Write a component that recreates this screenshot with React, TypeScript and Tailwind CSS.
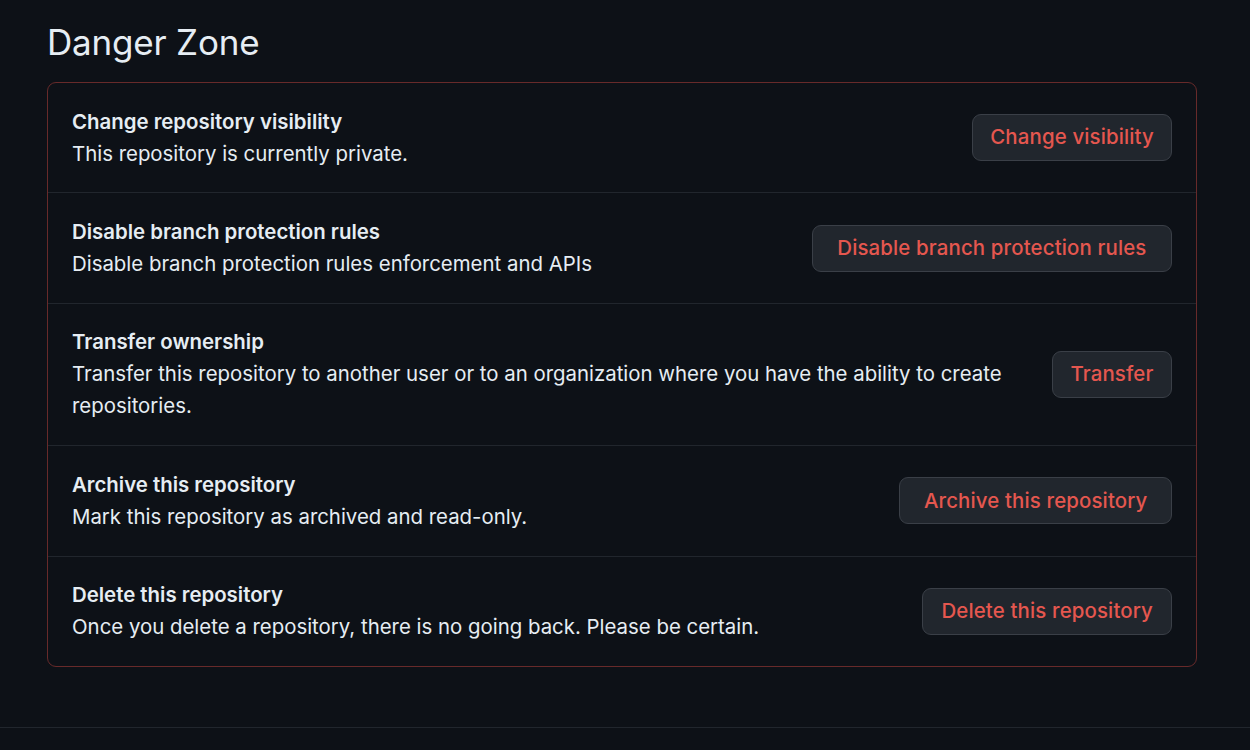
const rows = [
  {
    title: "Change repository visibility",
    desc: "This repository is currently private.",
    action: "Change visibility",
    pad: "px-[17px]",
  },
  {
    title: "Disable branch protection rules",
    desc: "Disable branch protection rules enforcement and APIs",
    action: "Disable branch protection rules",
    pad: "px-[24.5px]",
  },
  {
    title: "Transfer ownership",
    desc: "Transfer this repository to another user or to an organization where you have the ability to create repositories.",
    action: "Transfer",
    pad: "px-[17.5px]",
  },
  {
    title: "Archive this repository",
    desc: "Mark this repository as archived and read-only.",
    action: "Archive this repository",
    pad: "px-[23.5px]",
  },
  {
    title: "Delete this repository",
    desc: "Once you delete a repository, there is no going back. Please be certain.",
    action: "Delete this repository",
    pad: "px-[18px]",
  },
];

const App = () => {
  return (
    <div className="min-h-screen w-full bg-[#0d1117] font-['Inter','Liberation_Sans',sans-serif] text-[#e6edf3]">
      <div className="pl-[47px] pr-[53px] pt-[20px]">
        <h2 className="text-[35px] leading-[44px] font-normal tracking-[-0.2px]">Danger Zone</h2>

        <div className="mt-[18px] rounded-[9px] border border-[#672a2a]">
          {rows.map((row, i) => (
            <div
              key={row.title}
              className={`flex items-center gap-6 py-[22.7px] pl-[24px] pr-[24px] ${i > 0 ? "border-t border-[#21262d]" : ""}`}
            >
              <div className="flex-1 text-[20.4px] leading-[32px]">
                <div className="font-semibold">{row.title}</div>
                <div>{row.desc}</div>
              </div>
              <button
                className={`h-[47px] shrink-0 rounded-[9px] border border-[#3a3f47] bg-[#21262d] ${row.pad} text-[20.4px] tracking-[0.15px] font-medium text-[#e5574f]`}
              >
                {row.action}
              </button>
            </div>
          ))}
        </div>
      </div>

      <div className="mt-[60px] border-t border-[#21262d]" />
    </div>
  );
};

export default App;
